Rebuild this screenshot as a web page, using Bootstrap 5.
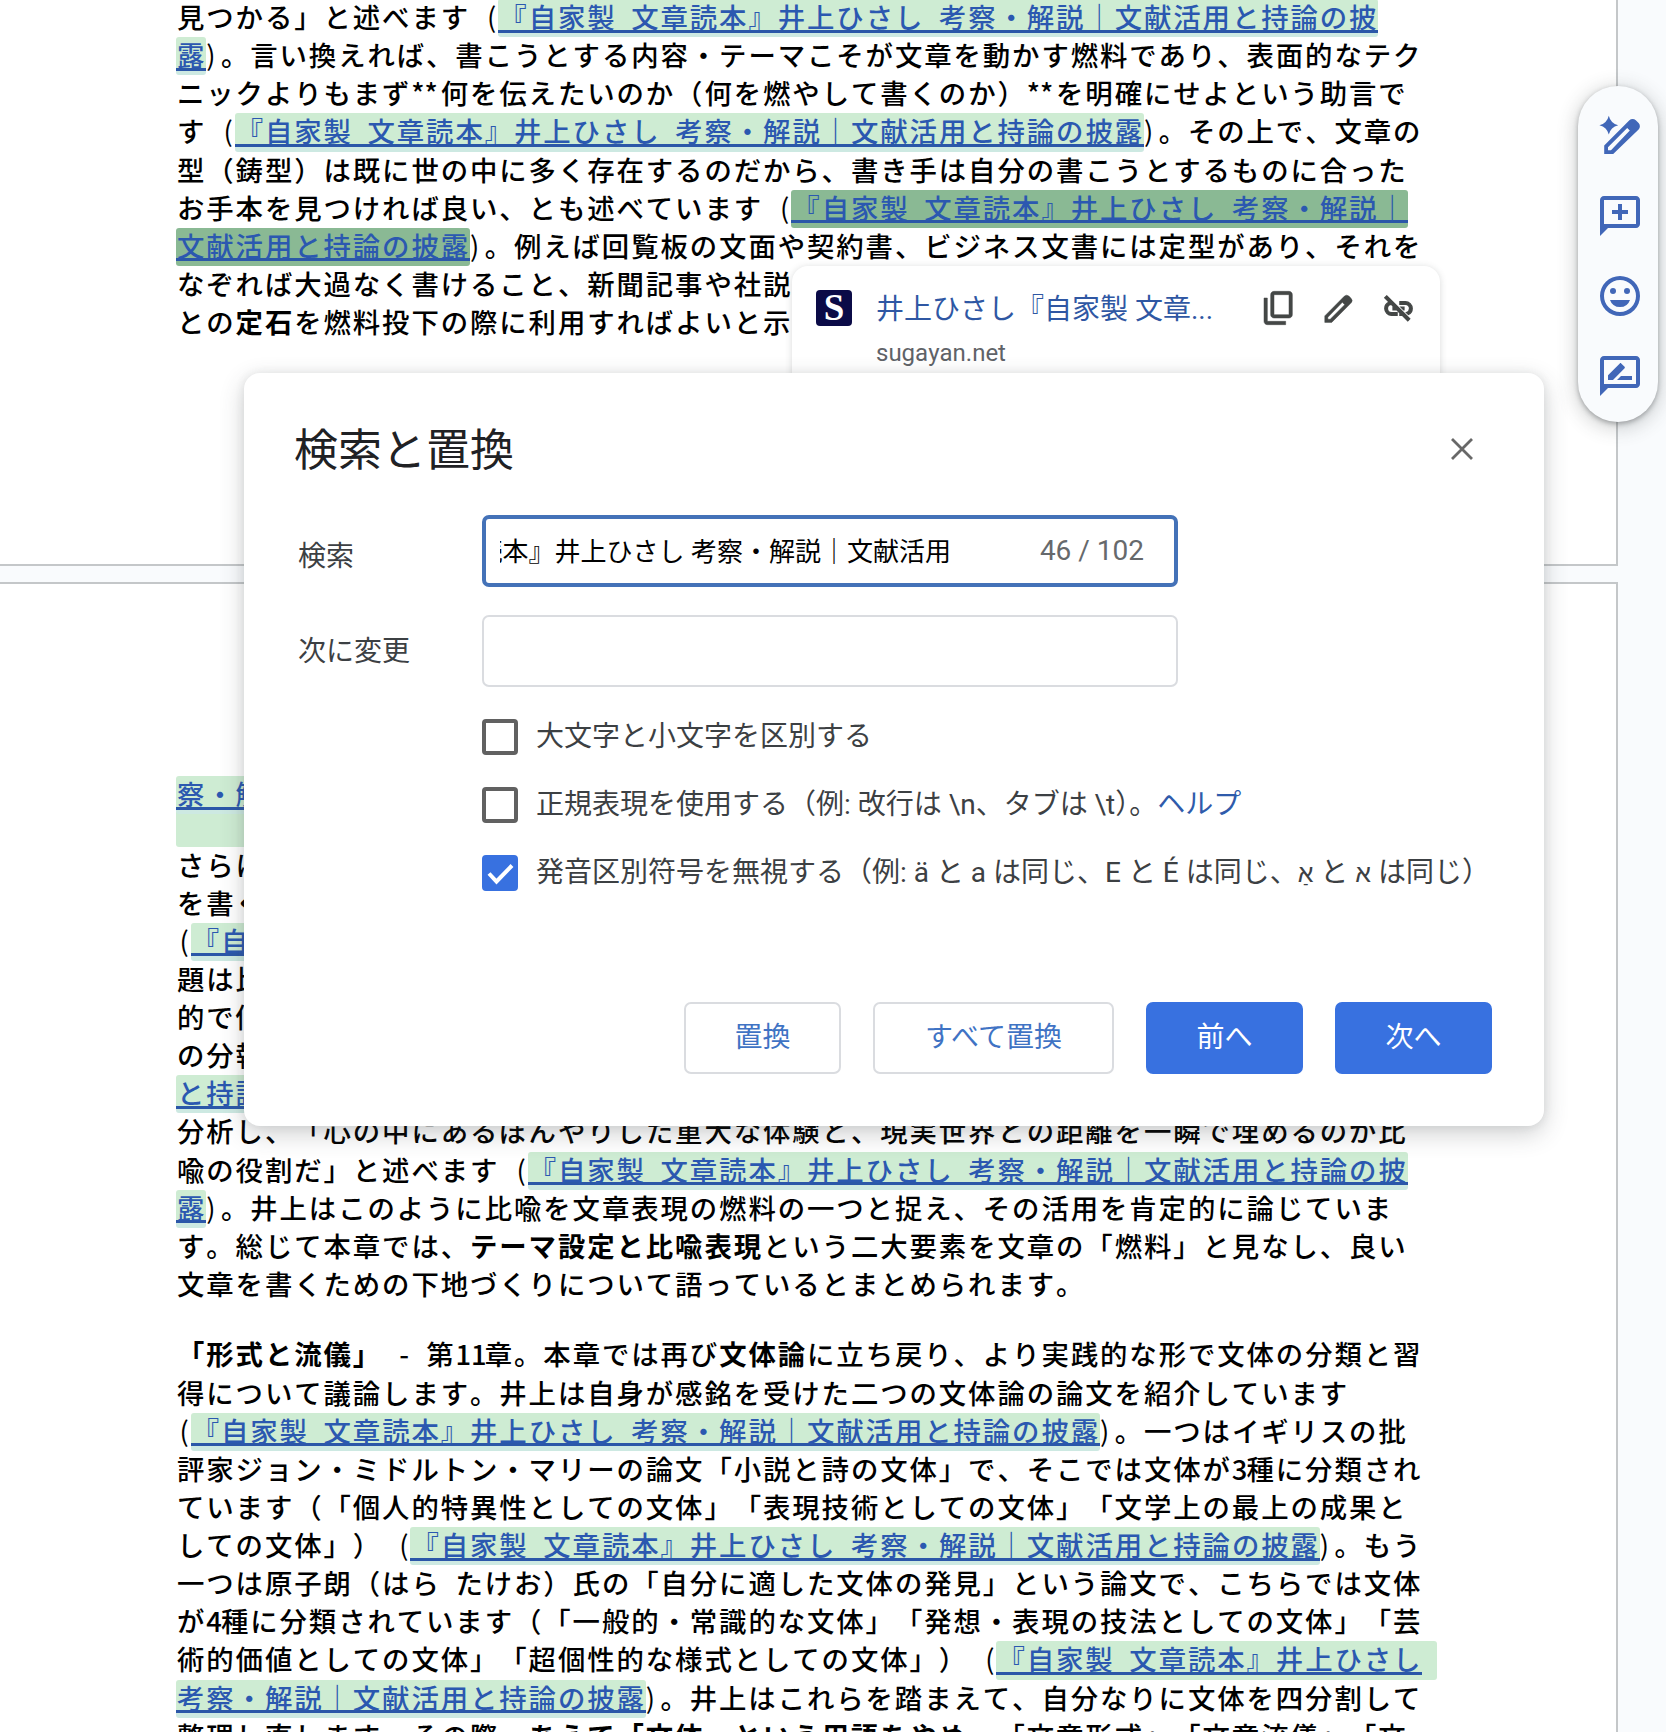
<!DOCTYPE html>
<html lang="ja">
<head>
<meta charset="utf-8">
<title>検索と置換</title>
<link rel="stylesheet" href="https://cdn.jsdelivr.net/npm/bootstrap@5.3.0/dist/css/bootstrap.min.css">
<style>
body{width:1666px;height:1732px;overflow:hidden;background:#f9fbfd;font-family:Roboto,"Noto Sans CJK JP",sans-serif;color:#3c4043;font-kerning:none}
.sheet{width:1618px;border:2px solid #c4c7c9;border-left:0;background:#fff;padding-left:176px;overflow:hidden}
.sheet-a{height:566px;border-top:0}
.sheet-b{height:1180px;margin-top:16px;padding-top:192px}
.doc-text{margin:0 0 32.4px 1px;font:500 27.4px/38.13px "Noto Sans CJK JP",sans-serif;font-kerning:none;letter-spacing:1.91px;word-spacing:6.6px;color:#000;white-space:nowrap;text-spacing-trim:space-all;position:relative}
.sheet-a .doc-text{top:-3px}
.sheet-b .doc-text{top:-2px}
.doc-text strong{font-weight:700}
.hw,.hw2{display:inline-block;width:14.66px;letter-spacing:0;text-align:center}
.hw2{width:29.32px}
.hw2.stars{text-indent:-3px}
.pl,.pr{font-weight:400;text-align:right}
.pl{padding-right:3px}
.pr{text-align:left}
.hit{display:inline-block;height:38.13px;line-height:34.13px;margin:0 0 -4px -1px;padding-left:1px;border-radius:3px;color:#2b58b0;text-decoration:none;white-space:pre;
 background:linear-gradient(#2b57a8,#2b57a8) 0 30.7px/100% 3px no-repeat,linear-gradient(#ceecd3 0 31px,#cde9e2 32px)}
.hit-now{background:linear-gradient(#2b57a8,#2b57a8) 0 30.7px/100% 3px no-repeat,#8ab994}
.hit-wrap{padding-right:14.6px;background:linear-gradient(#2b57a8,#2b57a8) 0 30.7px/calc(100% - 14.6px) 3px no-repeat,#ceecd3}
.blank-hit{height:34.4px;background:#ceecd3;border-radius:0 0 3px 3px;margin:-2px 0 0;width:400px}
.link-card{left:792px;top:266px;width:648px;height:140px;border:0;border-radius:16px;box-shadow:0 1px 7px rgba(60,64,67,.2);padding:22px 25px 0 24px}
.link-card svg{fill:#444746;flex:none}
.favi{width:36px;height:36px;border-radius:4px;background:#0b0b47;color:#fff;font:700 37px/36px "Liberation Serif",serif}
.link-title{font-size:28px;line-height:40px;color:#2f57a3;width:345px;margin:2px 0 -2px 24px;white-space:nowrap}
.link-host{font-size:24px;line-height:30px;color:#5f6368;margin:10px 0 0 60px}
.side-tools{left:1578px;top:86px;width:80px;height:336px;border-radius:40px;background:#f9fbfd;padding-top:26px;gap:32px;box-shadow:0 2px 5px rgba(60,64,67,.4),0 4px 18px 4px rgba(60,64,67,.2)}
.side-tools svg{fill:#4167b8}
.dlg{left:244px;top:373px;width:1300px;height:753px;border:0;border-radius:16px;background:#fff;box-shadow:0 8px 24px rgba(60,64,67,.24),0 0 10px rgba(60,64,67,.1);padding:45px 52px 52px 50px;z-index:2}
.dlg h1{font-size:44px;line-height:62px;font-weight:400;color:#202124;margin:2px 0 -2px}
.fields{margin-top:35px}
.field-row{height:72px;margin-bottom:28px}
.field-row label{width:188px;padding:1px 0 0 4px;font-size:28px}
.field-row .lower{padding-top:11px}
.field-box{width:696px;height:72px;border:2px solid #dadce0;border-radius:7px}
.field-box.on{border:4px solid #4472b8;padding:0 30px 0 14px}
.typed{width:451px;font-size:26px;color:#000;white-space:pre;padding-top:2px}
.tally{font-size:28px;color:#66696c;white-space:nowrap}
.opts{margin:4px 0 0 188px}
.opt{height:36px;margin-bottom:32px;gap:18px;font-size:28px;white-space:nowrap}
.opt .form-check-input{width:36px;height:36px;border:4px solid #616161;border-radius:4px;margin:0;box-shadow:none;flex:none}
.opt .form-check-input:checked{border-color:#3871e0;background-color:#3871e0;background-image:none}
.tick{left:0;top:0;z-index:1}
.half{font-feature-settings:"halt"}
.heb{font-size:25px;font-weight:500}
.actions{gap:32px}
.actions .btn{height:72px;min-width:157px;border:2px solid #dadce0;border-radius:7px;font-size:28px;padding:0 48px;color:#3f73c4;background:#fff;line-height:66px}
.actions .btn.wide{width:241px}
.actions .btn.main{background:#3871e0;border-color:#3871e0;color:#fff}
</style>
<script src="https://cdn.jsdelivr.net/npm/bootstrap@5.3.0/dist/js/bootstrap.bundle.min.js"></script>
</head>
<body class="position-relative">
<main>
<section class="sheet sheet-a">
<p class="doc-text">見つかる」と述べます <span class="hw pl">(</span><a class="hit">『自家製 文章読本』井上ひさし 考察・解説｜文献活用と持論の披</a><br>
<a class="hit">露</a><span class="hw pr">)</span>。言い換えれば、書こうとする内容・テーマこそが文章を動かす燃料であり、表面的なテク<br>
ニックよりもまず<span class="hw2 stars">**</span>何を伝えたいのか（何を燃やして書くのか）<span class="hw2 stars">**</span>を明確にせよという助言で<br>
す <span class="hw pl">(</span><a class="hit">『自家製 文章読本』井上ひさし 考察・解説｜文献活用と持論の披露</a><span class="hw pr">)</span>。その上で、文章の<br>
型（鋳型）は既に世の中に多く存在するのだから、書き手は自分の書こうとするものに合った<br>
お手本を見つければ良い、とも述べています <span class="hw pl">(</span><a class="hit hit-now">『自家製 文章読本』井上ひさし 考察・解説｜</a><br>
<a class="hit hit-now">文献活用と持論の披露</a><span class="hw pr">)</span>。例えば回覧板の文面や契約書、ビジネス文書には定型があり、それを<br>
なぞれば大過なく書けること、新聞記事や社説<br>
との<strong>定石</strong>を燃料投下の際に利用すればよいと示</p>
</section>
<section class="sheet sheet-b">
<p class="doc-text mb-0"><a class="hit">察・解説｜文献活用と持論の披露</a></p>
<div class="blank-hit"></div>
<p class="doc-text">さらに井上は比喩<br>
を書くことの<br>
<span class="hw pl">(</span><a class="hit">『自家製 文章読本』</a><br>
題は比喩の<br>
的で個性的<br>
の分報<br>
<a class="hit">と持論の披露</a><br>
分析し、「心の中にあるぼんやりした重大な体験と、現実世界との距離を一瞬で埋めるのが比<br>
喩の役割だ」と述べます <span class="hw pl">(</span><a class="hit">『自家製 文章読本』井上ひさし 考察・解説｜文献活用と持論の披</a><br>
<a class="hit">露</a><span class="hw pr">)</span>。井上はこのように比喩を文章表現の燃料の一つと捉え、その活用を肯定的に論じていま<br>
す。総じて本章では、<strong>テーマ設定と比喩表現</strong>という二大要素を文章の「燃料」と見なし、良い<br>
文章を書くための下地づくりについて語っているとまとめられます。</p>
<p class="doc-text"><strong>「形式と流儀」</strong> <span class="hw">-</span> 第<span class="hw2">11</span>章。本章では再び<strong>文体論</strong>に立ち戻り、より実践的な形で文体の分類と習<br>
得について議論します。井上は自身が感銘を受けた二つの文体論の論文を紹介しています<br>
<span class="hw pl">(</span><a class="hit">『自家製 文章読本』井上ひさし 考察・解説｜文献活用と持論の披露</a><span class="hw pr">)</span>。一つはイギリスの批<br>
評家ジョン・ミドルトン・マリーの論文「小説と詩の文体」で、そこでは文体が<span class="hw">3</span>種に分類され<br>
ています（「個人的特異性としての文体」「表現技術としての文体」「文学上の最上の成果と<br>
しての文体」） <span class="hw pl">(</span><a class="hit">『自家製 文章読本』井上ひさし 考察・解説｜文献活用と持論の披露</a><span class="hw pr">)</span>。もう<br>
一つは原子朗（はら たけお）氏の「自分に適した文体の発見」という論文で、こちらでは文体<br>
が<span class="hw">4</span>種に分類されています（「一般的・常識的な文体」「発想・表現の技法としての文体」「芸<br>
術的価値としての文体」「超個性的な様式としての文体」） <span class="hw pl">(</span><a class="hit hit-wrap">『自家製 文章読本』井上ひさし</a><br>
<a class="hit">考察・解説｜文献活用と持論の披露</a><span class="hw pr">)</span>。井上はこれらを踏まえて、自分なりに文体を四分割して<br>
整理し直します。その際、<strong>あえて「文体」という用語をやめ</strong>、「文章形式」「文章流儀」「文</p>
</section>
</main>

<aside class="link-card card position-absolute">
<div class="d-flex align-items-center">
<div class="favi text-center flex-shrink-0">S</div>
<div class="link-title">井上ひさし『自家製 文章...</div>
<div class="d-flex align-items-center ms-auto">
<svg width="40" height="40" viewBox="0 0 24 24"><path d="M9 18q-.825 0-1.412-.587T7 16V4q0-.825.587-1.412T9 2h9q.825 0 1.413.588T20 4v12q0 .825-.587 1.413T18 18H9Zm0-2h9V4H9v12Zm-4 6q-.825 0-1.412-.587T3 20V6h2v14h11v2H5Z" stroke="#444746" stroke-width=".3"/></svg>
<svg style="margin:0 25px 0 21px" width="37" height="37" viewBox="1 0 24 24"><path fill-rule="evenodd" d="M4.100 21v-4.200L16.700 4.100a2.300 2.300 0 0 1 3.200 0l1.200 1.200a2.300 2.300 0 0 1 0 3.200L8.600 21zM6.100 17.700V19h1.500L17 9.500l-1.500-1.500z" stroke="#444746" stroke-width=".3"/></svg>
<svg width="33" height="33" viewBox="0 0 24 24"><path stroke="#444746" stroke-width=".9" d="M17 7h-4v2h4c1.65 0 3 1.350 3 3 0 1.400-.96 2.550-2.270 2.900l1.520 1.500C20.880 15.610 22 13.950 22 12c0-2.760-2.240-5-5-5zm-1 4h-2.190l2 2H16zM2 4.270l3.110 3.110C3.290 8.120 2 9.910 2 12c0 2.760 2.240 5 5 5h4v-2H7c-1.650 0-3-1.350-3-3 0-1.590 1.210-2.900 2.760-3L8.730 11H8v2h2.730L13 15.270V17h1.730l4.010 4L20.200 19.540 3.470 2.800 2 4.270z"/></svg>
</div>
</div>
<div class="link-host">sugayan.net</div>
</aside>

<nav class="side-tools position-absolute d-flex flex-column align-items-center">
<svg class="ms-1" width="48" height="48" viewBox="0 0 24 24"><path d="M6.400 1.900q.9 3.800 4.700 4.700-3.800.9-4.700 4.700-.9-3.800-4.700-4.700 3.800-.9 4.700-4.700z"/><path fill-rule="evenodd" d="M4.100 21v-4.200L16.700 4.100a2.300 2.300 0 0 1 3.200 0l1.400 1.400a2.300 2.300 0 0 1 0 3.200L8.600 21zM6 17.600V19.100h1.500L16.900 9.300l-1.300-1.300z"/></svg>
<svg class="ms-1" width="48" height="48" viewBox="0 0 24 24"><path fill-rule="evenodd" d="M2 22V4c0-1.100.9-2 2-2h16c1.100 0 2 .9 2 2v12c0 1.100-.9 2-2 2H6zM4 4v12h16V4zM11 6h2v3h3v2h-3v3h-2v-3H8V9h3z"/></svg>
<svg class="ms-1" width="48" height="48" viewBox="0 0 24 24"><path fill-rule="evenodd" d="M12 2a10 10 0 1 0 0 20 10 10 0 0 0 0-20zm0 18a8 8 0 1 1 0-16 8 8 0 0 1 0 16z"/><circle cx="8.500" cy="9.500" r="1.500"/><circle cx="15.500" cy="9.500" r="1.500"/><path d="M7 14h10a5.300 5.300 0 0 1-10 0z"/></svg>
<svg class="ms-1" width="48" height="48" viewBox="0 0 24 24"><path fill-rule="evenodd" d="M2 22V4c0-1.100.9-2 2-2h16c1.100 0 2 .9 2 2v12c0 1.100-.9 2-2 2H6zM4 4v12h16V4z"/><path d="M6 14v-2.400l5.900-5.900c.2-.2.5-.2.7 0l1.700 1.700c.2.200.2.500 0 .7L8.500 14zM18 14h-7.500l2-2H18z"/></svg>
</nav>

<div class="dlg position-absolute d-flex flex-column" role="dialog">
<div class="d-flex justify-content-between align-items-center">
<h1>検索と置換</h1>
<svg width="60" height="40" viewBox="0 0 60 40" fill="none" stroke="#686868" stroke-width="2.800"><path d="M20 10l20 20M40 10L20 30"/></svg>
</div>
<div class="fields">
<div class="field-row d-flex align-items-center"><label class="lower">検索</label>
<div class="field-box on d-flex align-items-center justify-content-between"><div class="typed d-flex justify-content-end overflow-hidden"><span>読本』井上ひさし 考察・解説｜文献活用</span></div><span class="tally">46 / 102</span></div></div>
<div class="field-row d-flex align-items-center"><label>次に変更</label><div class="field-box"></div></div>
</div>
<div class="opts">
<div class="opt d-flex align-items-center"><input class="form-check-input" type="checkbox"><label>大文字と小文字を区別する</label></div>
<div class="opt d-flex align-items-center"><input class="form-check-input" type="checkbox"><label>正規表現を使用する（例: 改行は \n、タブは \t<span class="half">）</span>。<span style="color:#2f5bab">ヘルプ</span></label></div>
<div class="opt d-flex align-items-center position-relative"><input class="form-check-input" type="checkbox" checked><svg class="tick position-absolute" width="36" height="36" fill="none" stroke="#fff" stroke-width="4"><path d="M7 18.500l7.500 8L30 10.500"/></svg><label>発音区別符号を無視する（例: ä と a は同じ、E と É は同じ、<bdi class="heb">אַ</bdi> と <bdi class="heb">א</bdi> は同じ）</label></div>
</div>
<div class="actions d-flex justify-content-end mt-auto">
<button class="btn">置換</button><button class="btn wide">すべて置換</button><button class="btn main">前へ</button><button class="btn main">次へ</button>
</div>
</div>
</body>
</html>
